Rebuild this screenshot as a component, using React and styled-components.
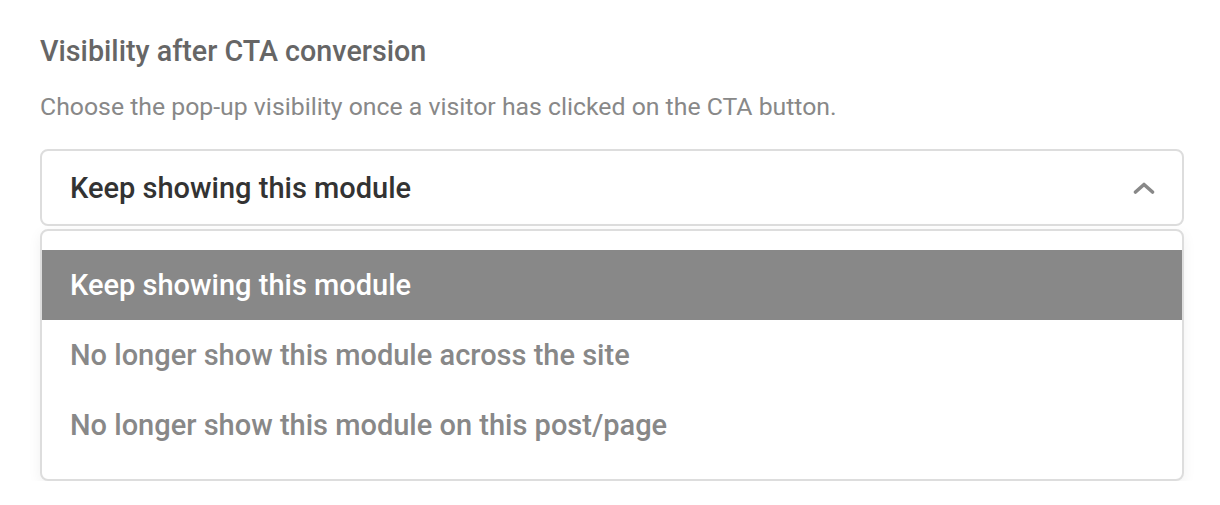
import React from "react";
import styled, { createGlobalStyle } from "styled-components";

const Global = createGlobalStyle`
  html, body { margin: 0; padding: 0; background: #fff; }
  body { font-family: Roboto, "Noto Sans", sans-serif; -webkit-font-smoothing: antialiased; }
`;

const Page = styled.div`
  padding: 34px 36px 0 40px;
  width: 1144px;
`;

const Title = styled.h3`
  margin: 0;
  font-size: 28.7px;
  line-height: 34px;
  font-weight: 500;
  color: #666;
`;

const Description = styled.p`
  margin: 24px 0 0;
  font-size: 24.8px;
  line-height: 30px;
  font-weight: 400;
  color: #888;
`;

const SelectWrap = styled.div`
  margin-top: 27px;
  display: flex;
  flex-direction: column;
  gap: 3px;
`;

const Trigger = styled.div`
  height: 77px;
  box-sizing: border-box;
  border: 2px solid #ddd;
  border-radius: 8px;
  display: flex;
  align-items: center;
  justify-content: space-between;
  padding: 0 27px 0 28px;
  font-size: 29px;
  font-weight: 500;
  color: #333;
`;

const Menu = styled.ul`
  list-style: none;
  margin: 0;
  padding: 19px 0;
  border: 2px solid #ddd;
  border-radius: 8px;
  box-shadow: 0 4px 14px rgba(0, 0, 0, 0.06);
  background: #fff;
`;

const Option = styled.li`
  height: 70px;
  display: flex;
  align-items: center;
  padding: 0 28px;
  font-size: 29px;
  font-weight: 500;
  color: ${(p) => (p.$active ? "#fff" : "#888")};
  background: ${(p) => (p.$active ? "#888" : "transparent")};
`;

const Chevron = () => (
  <svg width="22" height="14" viewBox="0 0 22 14" fill="none">
    <path d="M2.5 11 L11 3.5 L19.5 11" stroke="#888" strokeWidth="3.6" strokeLinecap="round" strokeLinejoin="round" />
  </svg>
);

export default function App() {
  const options = [
    "Keep showing this module",
    "No longer show this module across the site",
    "No longer show this module on this post/page",
  ];
  return (
    <Page>
      <Global />
      <Title>Visibility after CTA conversion</Title>
      <Description>Choose the pop-up visibility once a visitor has clicked on the CTA button.</Description>
      <SelectWrap>
        <Trigger>
          <span>Keep showing this module</span>
          <Chevron />
        </Trigger>
        <Menu>
          {options.map((o, i) => (
            <Option key={o} $active={i === 0}>{o}</Option>
          ))}
        </Menu>
      </SelectWrap>
    </Page>
  );
}
